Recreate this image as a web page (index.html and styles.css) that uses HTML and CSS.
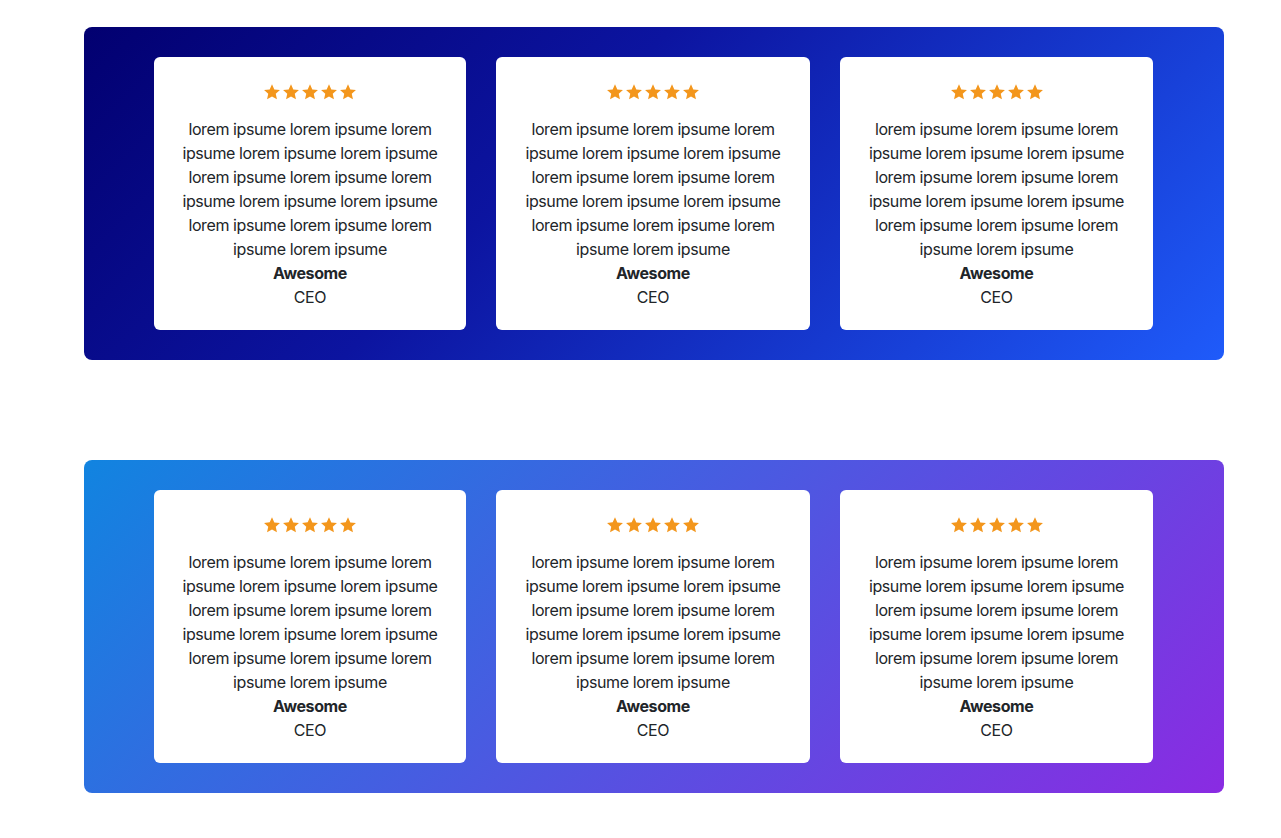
FILE: index.html
```html
<!DOCTYPE html>
<html>
<head>
<meta charset="utf-8">
<link rel="stylesheet" href="styles.css">
</head>
<body>
<svg width="0" height="0" class="defs">
  <defs>
    <symbol id="star" viewBox="0 0 24 24">
      <path d="M12 1.6l3.1 6.9 7.5.8-5.6 5.1 1.6 7.4L12 18l-6.6 3.8 1.6-7.4-5.6-5.1 7.5-.8z"/>
    </symbol>
  </defs>
</svg>
<section class="band band-a">
  <div class="card">
    <div class="stars"><svg><use href="#star"/></svg><svg><use href="#star"/></svg><svg><use href="#star"/></svg><svg><use href="#star"/></svg><svg><use href="#star"/></svg></div>
    <p class="quote">lorem ipsume lorem ipsume lorem ipsume lorem ipsume lorem ipsume lorem ipsume lorem ipsume lorem ipsume lorem ipsume lorem ipsume lorem ipsume lorem ipsume lorem ipsume lorem ipsume</p>
    <p class="name">Awesome</p>
    <p class="role">CEO</p>
  </div>
  <div class="card">
    <div class="stars"><svg><use href="#star"/></svg><svg><use href="#star"/></svg><svg><use href="#star"/></svg><svg><use href="#star"/></svg><svg><use href="#star"/></svg></div>
    <p class="quote">lorem ipsume lorem ipsume lorem ipsume lorem ipsume lorem ipsume lorem ipsume lorem ipsume lorem ipsume lorem ipsume lorem ipsume lorem ipsume lorem ipsume lorem ipsume lorem ipsume</p>
    <p class="name">Awesome</p>
    <p class="role">CEO</p>
  </div>
  <div class="card">
    <div class="stars"><svg><use href="#star"/></svg><svg><use href="#star"/></svg><svg><use href="#star"/></svg><svg><use href="#star"/></svg><svg><use href="#star"/></svg></div>
    <p class="quote">lorem ipsume lorem ipsume lorem ipsume lorem ipsume lorem ipsume lorem ipsume lorem ipsume lorem ipsume lorem ipsume lorem ipsume lorem ipsume lorem ipsume lorem ipsume lorem ipsume</p>
    <p class="name">Awesome</p>
    <p class="role">CEO</p>
  </div>
</section>
<section class="band band-b">
  <div class="card">
    <div class="stars"><svg><use href="#star"/></svg><svg><use href="#star"/></svg><svg><use href="#star"/></svg><svg><use href="#star"/></svg><svg><use href="#star"/></svg></div>
    <p class="quote">lorem ipsume lorem ipsume lorem ipsume lorem ipsume lorem ipsume lorem ipsume lorem ipsume lorem ipsume lorem ipsume lorem ipsume lorem ipsume lorem ipsume lorem ipsume lorem ipsume</p>
    <p class="name">Awesome</p>
    <p class="role">CEO</p>
  </div>
  <div class="card">
    <div class="stars"><svg><use href="#star"/></svg><svg><use href="#star"/></svg><svg><use href="#star"/></svg><svg><use href="#star"/></svg><svg><use href="#star"/></svg></div>
    <p class="quote">lorem ipsume lorem ipsume lorem ipsume lorem ipsume lorem ipsume lorem ipsume lorem ipsume lorem ipsume lorem ipsume lorem ipsume lorem ipsume lorem ipsume lorem ipsume lorem ipsume</p>
    <p class="name">Awesome</p>
    <p class="role">CEO</p>
  </div>
  <div class="card">
    <div class="stars"><svg><use href="#star"/></svg><svg><use href="#star"/></svg><svg><use href="#star"/></svg><svg><use href="#star"/></svg><svg><use href="#star"/></svg></div>
    <p class="quote">lorem ipsume lorem ipsume lorem ipsume lorem ipsume lorem ipsume lorem ipsume lorem ipsume lorem ipsume lorem ipsume lorem ipsume lorem ipsume lorem ipsume lorem ipsume lorem ipsume</p>
    <p class="name">Awesome</p>
    <p class="role">CEO</p>
  </div>
</section>
</body>
</html>
```
FILE: styles.css
```css
* { box-sizing: border-box; }
html, body { margin: 0; padding: 0; background: #fff; }
body {
  font-family: Inter, "Noto Sans", Roboto, sans-serif;
  font-size: 16px;
  line-height: 24px;
  letter-spacing: -0.4px;
  color: #212529;
  padding: 27px 0 40px 84px;
}
.defs { position: absolute; width: 0; height: 0; }
.band {
  width: 1140px;
  height: 333px;
  border-radius: 8px;
  padding: 30px 71px 30px 70px;
  display: grid;
  grid-template-columns: 312px 314px 313px;
  column-gap: 30px;
}
.band + .band { margin-top: 100px; }
.band-a { background: linear-gradient(135deg, #020070 0%, #0c14a0 40%, #1f5bfa 100%); }
.band-b { background: linear-gradient(135deg, #1184e0 0%, #8a2be2 100%); }
.card {
  background: #fff;
  border-radius: 6px;
  padding: 23px 24px 20px;
  text-align: center;
}
.stars {
  display: flex;
  justify-content: center;
  gap: 1px;
  height: 24px;
  align-items: center;
  margin-bottom: 13px;
}
.stars svg { width: 18px; height: 18px; fill: #f3961c; }
.card p { margin: 0; }
.name { font-weight: 700; }
```
